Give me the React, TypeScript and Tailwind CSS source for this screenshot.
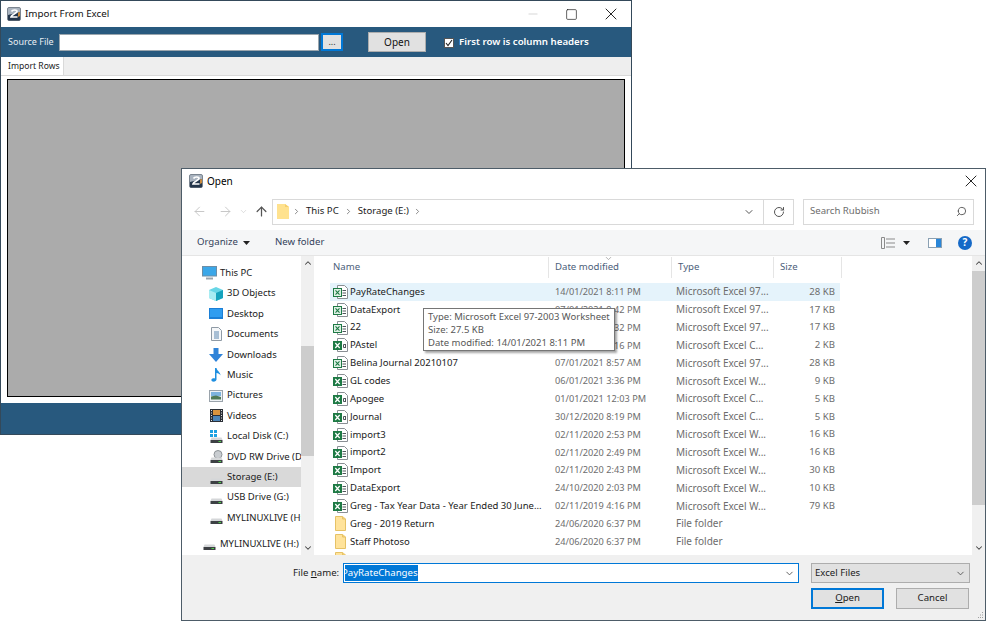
import { ArrowLeft, ArrowRight, ArrowUp, ChevronDown, ChevronRight, ChevronUp, RotateCw, Search, Square, Minus, X } from 'lucide-react';

const font = "font-['Noto_Sans','Open_Sans',sans-serif]";

type FileRow = { name: string; date: string; type: string; size: string; icon: 'xls' | 'xlsx' | 'csv' | 'folder' };

const files: FileRow[] = [
  { name: 'PayRateChanges', date: '14/01/2021 8:11 PM', type: 'Microsoft Excel 97...', size: '28 KB', icon: 'xls' },
  { name: 'DataExport', date: '07/01/2021 8:42 PM', type: 'Microsoft Excel 97...', size: '17 KB', icon: 'xls' },
  { name: '22', date: '07/01/2021 8:32 PM', type: 'Microsoft Excel 97...', size: '17 KB', icon: 'xls' },
  { name: 'PAstel', date: '07/01/2021 8:16 PM', type: 'Microsoft Excel C...', size: '2 KB', icon: 'csv' },
  { name: 'Belina Journal 20210107', date: '07/01/2021 8:57 AM', type: 'Microsoft Excel 97...', size: '28 KB', icon: 'xls' },
  { name: 'GL codes', date: '06/01/2021 3:36 PM', type: 'Microsoft Excel W...', size: '9 KB', icon: 'xlsx' },
  { name: 'Apogee', date: '01/01/2021 12:03 PM', type: 'Microsoft Excel C...', size: '5 KB', icon: 'csv' },
  { name: 'Journal', date: '30/12/2020 8:19 PM', type: 'Microsoft Excel C...', size: '5 KB', icon: 'csv' },
  { name: 'import3', date: '02/11/2020 2:53 PM', type: 'Microsoft Excel W...', size: '16 KB', icon: 'xlsx' },
  { name: 'import2', date: '02/11/2020 2:49 PM', type: 'Microsoft Excel W...', size: '16 KB', icon: 'xlsx' },
  { name: 'Import', date: '02/11/2020 2:43 PM', type: 'Microsoft Excel W...', size: '30 KB', icon: 'xlsx' },
  { name: 'DataExport', date: '24/10/2020 2:03 PM', type: 'Microsoft Excel W...', size: '10 KB', icon: 'xlsx' },
  { name: 'Greg - Tax Year Data - Year Ended 30 June...', date: '02/11/2019 4:16 PM', type: 'Microsoft Excel W...', size: '79 KB', icon: 'xlsx' },
  { name: 'Greg - 2019 Return', date: '24/06/2020 6:37 PM', type: 'File folder', size: '', icon: 'folder' },
  { name: 'Staff Photoso', date: '24/06/2020 6:37 PM', type: 'File folder', size: '', icon: 'folder' },
  { name: '', date: '', type: '', size: '', icon: 'folder' },
];

function AppIcon() {
  return (
    <svg width="14" height="14" viewBox="0 0 14 14" className="shrink-0">
      <rect x="0.5" y="0.5" width="13" height="13" rx="1.5" fill="#a9b3bf" stroke="#7b8590" />
      <path d="M1 8L13 5V12.5a1 1 0 0 1-1 1H2a1 1 0 0 1-1-1Z" fill="#24364b" />
      <path d="M11 5.5L13 5V9L11 10Z" fill="#c98a3c" />
      <path d="M4.5 4.5C5.5 2.5 10 2.5 10 4.5C10 6.5 4.5 7 4 10H10.5" fill="none" stroke="#fff" strokeWidth="1.7" />
    </svg>
  );
}

function FileIcon({ kind }: { kind: FileRow['icon'] }) {
  if (kind === 'folder') return <FolderIcon />;
  return (
    <svg width="15" height="14" viewBox="0 0 15 14" className="shrink-0">
      <path d="M4.5 0.5H11.5L14.5 3.5V13.5H4.5Z" fill="#fff" stroke="#8a8f94" />
      {kind !== 'csv' && <path d="M9.5 5.5H13M9.5 8H13M9.5 10.5H13" stroke="#50565c" />}
      {kind === 'csv' && <path d="M12.5 6.5H10.5V9.5H12.5M12.5 6V10" fill="none" stroke="#50565c" />}
      {kind === 'xls' ? (
        <>
          <rect x="0.5" y="3.5" width="8" height="8" fill="#dff1e5" stroke="#1e7a45" />
          <path d="M2.5 5.3L6.5 9.7M6.5 5.3L2.5 9.7" stroke="#1e7a45" strokeWidth="1.1" />
        </>
      ) : (
        <>
          <rect x="0" y="3" width="9" height="9" fill="#1e7a45" />
          <path d="M2.3 5L6.7 10M6.7 5L2.3 10" stroke="#fff" strokeWidth="1.2" />
        </>
      )}
    </svg>
  );
}

function FolderIcon() {
  return (
    <span className="flex w-[15px] shrink-0 pl-[2px]">
      <svg width="11" height="15" viewBox="0 0 11 15">
        <path d="M0.5 0.5H7.5L10.5 3V14.5H0.5Z" fill="#ffe39b" stroke="#e6c266" />
        <path d="M7.5 0.5V3H10.5" fill="#f6d27a" stroke="#e6c266" />
      </svg>
    </span>
  );
}

function DriveIcon({ win, disc }: { win?: boolean; disc?: boolean }) {
  return (
    <svg width="13" height="13" viewBox="0 0 13 13" className="shrink-0">
      {win && <path d="M0 0H3V3H0ZM4 0H7V3H4ZM0 4H3V7H0ZM4 4H7V7H4Z" fill="#1ba1e2" />}
      {disc && <circle cx="8" cy="4.5" r="4" fill="#c9cdd1" stroke="#8d9296" />}
      <path d="M1.5 7.5H11.5L12.5 10H0.5Z" fill="#d5d7d9" />
      <rect x="0.5" y="10" width="12" height="3" fill="#3d4044" />
      <rect x="8.5" y="11" width="2.5" height="1" fill="#4fd14a" />
    </svg>
  );
}

function NavIcon({ name }: { name: string }) {
  if (name === 'pc')
    return (
      <svg width="15" height="14" viewBox="0 0 15 14" className="shrink-0">
        <rect x="0.5" y="0.5" width="14" height="9.5" fill="#3ba7e8" stroke="#6d8ea6" />
        <path d="M4 12.5H11" stroke="#9aa4ac" strokeWidth="2" />
      </svg>
    );
  if (name === '3d')
    return (
      <svg width="14" height="14" viewBox="0 0 14 14" className="shrink-0">
        <path d="M7 0L14 3V11L7 14L0 11V3Z" fill="#67d6e6" />
        <path d="M7 6L14 3V11L7 14Z" fill="#16a3bd" />
        <path d="M0 3L7 6V14L0 11Z" fill="#a8ecf2" />
      </svg>
    );
  if (name === 'desktop')
    return (
      <svg width="14" height="11" viewBox="0 0 14 11" className="shrink-0">
        <rect width="14" height="11" fill="#1b7fd6" />
        <rect x="1" y="1" width="12" height="8" fill="#2f9df0" />
      </svg>
    );
  if (name === 'docs')
    return (
      <svg width="11" height="14" viewBox="0 0 11 14" className="shrink-0">
        <path d="M0.5 0.5H7.5L10.5 3.5V13.5H0.5Z" fill="#f5f7f9" stroke="#8f9aa5" />
        <path d="M3 5H8M3 7H8M3 9H8M3 11H8" stroke="#5a86b0" />
      </svg>
    );
  if (name === 'down')
    return (
      <svg width="14" height="14" viewBox="0 0 14 14" className="shrink-0">
        <path d="M4.5 0H9.5V6H14L7 14L0 6H4.5Z" fill="#2f83d8" />
      </svg>
    );
  if (name === 'music')
    return (
      <svg width="10" height="14" viewBox="0 0 10 14" className="shrink-0">
        <path d="M4 0H5.5C6 3 9.5 4 9.5 7.5C9 6 7 5 5.5 5V11.5C5.5 13 3.5 14 1.5 13.5C0 13 0 11 1.5 10.5C2.5 10 3.5 10 4 10.5Z" fill="#1f8fe0" />
      </svg>
    );
  if (name === 'pics')
    return (
      <svg width="14" height="12" viewBox="0 0 14 12" className="shrink-0">
        <rect x="0.5" y="0.5" width="13" height="11" fill="#eef2f5" stroke="#9aa3ab" />
        <rect x="2" y="2" width="10" height="4" fill="#7db3dd" />
        <path d="M2 9.5V6.5L7 5.5L12 7V9.5Z" fill="#4f7a56" />
      </svg>
    );
  if (name === 'videos')
    return (
      <svg width="13" height="13" viewBox="0 0 13 13" className="shrink-0">
        <rect width="13" height="13" fill="#2b2f36" />
        <rect x="3" y="1" width="7" height="5" fill="#d9943e" />
        <rect x="3" y="7" width="7" height="5" fill="#4c85b8" />
        <path d="M1 1.5H2M1 4H2M1 6.5H2M1 9H2M1 11.5H2M11 1.5H12M11 4H12M11 6.5H12M11 9H12M11 11.5H12" stroke="#dfe3e6" />
      </svg>
    );
  if (name === 'c') return <DriveIcon win />;
  if (name === 'dvd') return <DriveIcon disc />;
  return <DriveIcon />;
}

const navItems = [
  { label: 'This PC', icon: 'pc', top: true },
  { label: '3D Objects', icon: '3d' },
  { label: 'Desktop', icon: 'desktop' },
  { label: 'Documents', icon: 'docs' },
  { label: 'Downloads', icon: 'down' },
  { label: 'Music', icon: 'music' },
  { label: 'Pictures', icon: 'pics' },
  { label: 'Videos', icon: 'videos' },
  { label: 'Local Disk (C:)', icon: 'c' },
  { label: 'DVD RW Drive (D:) Audio CD', icon: 'dvd' },
  { label: 'Storage (E:)', icon: 'drive', active: true },
  { label: 'USB Drive (G:)', icon: 'drive' },
  { label: 'MYLINUXLIVE (H:)', icon: 'drive' },
];

function Sidebar() {
  return (
    <div className="flex w-[132px] shrink-0">
      <div className="w-[119px] shrink-0 overflow-hidden pt-[7px] text-[9.5px] text-[#1a1a1a]">
        {navItems.map(item => (
          <div
            key={item.label}
            className={`flex h-[20.4px] items-center whitespace-nowrap ${item.top ? 'pl-[18px]' : 'pl-[25px]'} ${item.active ? 'bg-[#d9d9d9]' : ''}`}
          >
            <span className="flex w-[18px] shrink-0 items-center justify-center">
              <NavIcon name={item.icon} />
            </span>
            <span className="ml-[2px]">{item.label}</span>
          </div>
        ))}
        <div className="mt-[5.5px] flex h-[20.4px] items-center whitespace-nowrap pl-[21px]">
          <span className="w-[17px] shrink-0"><NavIcon name="drive" /></span>
          <span>MYLINUXLIVE (H:)</span>
        </div>
      </div>
      <div className="flex w-[13px] shrink-0 flex-col bg-[#f0f0f0]">
        <div className="flex h-[14px] items-center justify-center"><ChevronUp size={10} strokeWidth={2.5} color="#444" /></div>
        <div className="flex-1 pt-[76px] pb-[85px]"><div className="h-full bg-[#cdcdcd]" /></div>
        <div className="flex h-[14px] items-center justify-center"><ChevronDown size={10} strokeWidth={2.5} color="#444" /></div>
      </div>
    </div>
  );
}

function ColHead({ w, label, sorted }: { w: string; label: string; sorted?: boolean }) {
  return (
    <div className={`relative flex h-[21px] items-center border-r border-[#e5e5e5] pl-[6px] ${w}`}>
      {sorted && <ChevronDown size={9} color="#999" className="absolute left-[55px] top-[-3px]" />}
      {label}
    </div>
  );
}

function FileList() {
  return (
    <div className="relative flex min-w-0 flex-1 overflow-hidden">
      <div className="min-w-0 flex-1 pl-[16px] text-[9.6px]">
        <div className="flex h-[27px] pt-[1px] text-[#4c607a]">
          <div className="flex h-[21px] w-[219px] items-center border-r border-[#e5e5e5] pl-[3px]">Name</div>
          <ColHead w="w-[123px]" label="Date modified" sorted />
          <ColHead w="w-[102px]" label="Type" />
          <ColHead w="w-[68px]" label="Size" />
        </div>
        {files.map((f, i) => (
          <div
            key={i}
            className={`flex h-[17.85px] w-[510px] items-center whitespace-nowrap ${i === 0 ? 'bg-[#e5f3fb]' : ''}`}
          >
            <div className="flex w-[219px] items-center gap-[2px] pl-[3px] text-[9.5px] text-[#1a1a1a]">
              <FileIcon kind={f.icon} />
              <span>{f.name}</span>
            </div>
            <div className="w-[122px] pl-[6px] text-[9.2px] text-[#6d6d6d]">{f.date}</div>
            <div className="w-[103px] pl-[5px] text-[10px] text-[#6d6d6d]">{f.type}</div>
            <div className="w-[62px] pr-[1px] text-right text-[#6d6d6d]">{f.size}</div>
          </div>
        ))}
      </div>
      <div className="flex w-[13px] shrink-0 flex-col bg-[#f0f0f0]">
        <div className="flex h-[14px] items-center justify-center"><ChevronUp size={10} strokeWidth={2.5} color="#444" /></div>
        <div className="flex-1 pt-[1px] pb-[36px]"><div className="h-full bg-[#cdcdcd]" /></div>
        <div className="flex h-[14px] items-center justify-center"><ChevronDown size={10} strokeWidth={2.5} color="#444" /></div>
      </div>
      <div className="absolute left-[109px] top-[52px] border border-[#767676] bg-white px-[4px] pt-[1px] pb-[1px] text-[9.5px] leading-[13px] text-[#575757] shadow-[2px_2px_2px_rgba(0,0,0,0.35)]">
        <div className="whitespace-nowrap">Type: Microsoft Excel 97-2003 Worksheet</div>
        <div className="whitespace-nowrap">Size: 27.5 KB</div>
        <div className="whitespace-nowrap">Date modified: 14/01/2021 8:11 PM</div>
      </div>
    </div>
  );
}

function OpenDialog() {
  return (
    <div className={`absolute left-[181px] top-[168px] flex h-[453px] w-[805px] flex-col border border-[#4d5c68] bg-white ${font}`}>
      <div className="flex h-[24px] shrink-0 items-center pl-[7px] pr-[4px] text-[10px] text-black">
        <AppIcon />
        <span className="ml-[4px]">Open</span>
        <X size={20} strokeWidth={1.1} className="ml-auto" color="#111" />
      </div>
      <div className="flex h-[37px] shrink-0 items-center text-[9.6px]">
        <div className="flex w-[90px] items-center pl-[10px] text-[#c4c4c4]">
          <ArrowLeft size={15} strokeWidth={1.5} />
          <ArrowRight size={15} strokeWidth={1.5} className="ml-[11px]" />
          <ChevronDown size={9} strokeWidth={1.5} className="ml-[6px]" />
          <ArrowUp size={15} strokeWidth={2} color="#555" className="ml-[6px]" />
        </div>
        <div className="flex h-[26px] w-[522px] items-center border border-[#d9d9d9] text-[#1a1a1a]">
          <svg width="12" height="15" viewBox="0 0 12 15" className="ml-[4px] shrink-0"><path d="M0 0H8L12 3V15H0Z" fill="#ffe28f" /><path d="M8 0V3H12" fill="#f5cf6d" /></svg>
          <ChevronRight size={9} className="ml-[3px]" color="#666" />
          <span className="ml-[5px]">This PC</span>
          <ChevronRight size={9} className="ml-[5px]" color="#666" />
          <span className="ml-[5px]">Storage (E:)</span>
          <ChevronRight size={9} className="ml-[4px]" color="#666" />
          <div className="ml-auto flex h-full w-[29px] items-center justify-center border-r border-[#d9d9d9]">
            <ChevronDown size={12} color="#555" />
          </div>
          <div className="flex w-[29px] items-center justify-center"><RotateCw size={12} color="#555" /></div>
        </div>
        <div className="ml-[9px] flex h-[26px] w-[171px] items-center justify-between border border-[#d9d9d9] pl-[6px] pr-[6px] text-[#6d6d6d]">
          <span>Search Rubbish</span>
          <Search size={11} color="#555" className="-scale-x-100" />
        </div>
      </div>
      <div className="flex h-[26px] shrink-0 items-center border-b border-[#e5e5e5] bg-[#f5f6f7] pl-[15px] pr-[13px] text-[9.6px] text-[#33415a]">
        <span>Organize</span>
        <svg width="7" height="4" viewBox="0 0 7 4" className="ml-[5px]"><path d="M0 0H7L3.5 4Z" fill="#222" /></svg>
        <span className="ml-[25px]">New folder</span>
        <svg width="14" height="12" viewBox="0 0 14 12" className="ml-auto"><path d="M0.5 0.5H3.5V11.5H0.5ZM5 2H14M5 6H14M5 10H14" fill="none" stroke="#8b8b8b" /></svg>
        <svg width="7" height="4" viewBox="0 0 7 4" className="ml-[8px]"><path d="M0 0H7L3.5 4Z" fill="#222" /></svg>
        <svg width="14" height="10" viewBox="0 0 14 10" className="ml-[18px]"><rect x="0.5" y="0.5" width="13" height="9" fill="#fff" stroke="#8aa0b3" /><rect x="8" y="1" width="5" height="8" fill="#2a86d8" /></svg>
        <div className="ml-[16px] flex h-[14px] w-[14px] items-center justify-center rounded-full bg-[#1569c7] text-[10px] font-bold text-white">?</div>
      </div>
      <div className="flex min-h-0 flex-1">
        <Sidebar />
        <FileList />
      </div>
      <div className="relative h-[65px] shrink-0 bg-[#f0f0f0] text-[9.6px] text-[#1a1a1a]">
        <div className="flex items-center pt-[8px] pr-[15px]">
          <span className="ml-[111px] w-[50px] whitespace-nowrap">File <u>n</u>ame:</span>
          <div className="flex h-[20px] w-[456px] items-center border border-[#0078d7] bg-white pl-[1px]">
            <span className="h-[16px] w-[73px] overflow-hidden whitespace-nowrap bg-[#0078d7] leading-[15px] text-white">
              <span className="-ml-[3px] block">PayRateChanges</span>
            </span>
            <ChevronDown size={11} color="#555" className="ml-auto mr-[3px]" />
          </div>
          <div className="ml-[12px] flex h-[20px] flex-1 items-center justify-between border border-[#adadad] bg-[#e1e1e1] pl-[3px] pr-[3px]">
            <span>Excel Files</span>
            <ChevronDown size={11} color="#555" />
          </div>
        </div>
        <div className="flex justify-end gap-[12px] pt-[5px] pr-[16px]">
          <div className="flex h-[21px] w-[73px] items-center justify-center border-2 border-[#0078d7] bg-[#e1e1e1]"><span><u>O</u>pen</span></div>
          <div className="flex h-[21px] w-[73px] items-center justify-center border border-[#adadad] bg-[#e1e1e1]">Cancel</div>
        </div>
        <svg width="8" height="8" viewBox="0 0 8 8" className="absolute bottom-[1px] right-[1px]"><path d="M6 1H7V2H6ZM4 3.5H5V4.5H4ZM6 3.5H7V4.5H6ZM2 6H3V7H2ZM4 6H5V7H4ZM6 6H7V7H6Z" fill="#a0a0a0" /></svg>
      </div>
    </div>
  );
}

function ImportWindow() {
  return (
    <div className={`absolute left-0 top-0 flex h-[435px] w-[632px] flex-col border border-[#34495a] bg-white ${font}`}>
      <div className="flex h-[26px] shrink-0 items-center pl-[6px] text-[9.8px] text-[#111]">
        <AppIcon />
        <span className="ml-[4px]">Import From Excel</span>
        <Minus size={14} strokeWidth={1} color="#bbb" className="ml-auto" />
        <Square size={13} strokeWidth={1.2} color="#111" className="ml-[25px]" />
        <X size={20} strokeWidth={1.1} color="#111" className="ml-[23px] mr-[10px]" />
      </div>
      <div className="flex h-[30px] shrink-0 items-center bg-[#28597e] pl-[7px] text-[10px]">
        <span className="w-[51px] whitespace-nowrap text-[9px] text-[#e8eef3]">Source File</span>
        <div className="h-[17px] w-[260px] border border-[#9aa5ad] bg-white" />
        <div className="ml-[2px] flex h-[18px] w-[22px] items-center justify-center border-2 border-[#0078d7] bg-[#e1e1e1] text-[9px] text-[#333]">...</div>
        <div className="ml-[25px] flex h-[20px] w-[58px] items-center justify-center border border-[#adadad] bg-[#e1e1e1] text-[#111]">Open</div>
        <div className="ml-[18px] mt-[1px] flex h-[10px] w-[10px] items-center justify-center border border-[#555] bg-white">
          <svg width="8" height="8" viewBox="0 0 8 8"><path d="M1 4L3 6.5L7 1" fill="none" stroke="#222" strokeWidth="1.1" /></svg>
        </div>
        <span className="ml-[5px] mt-[1px] whitespace-nowrap text-[9.7px] font-semibold text-white">First row is column headers</span>
      </div>
      <div className="flex h-[18px] shrink-0 items-end bg-[#eeeeee] text-[8.6px] text-[#222]">
        <div className="flex h-[18px] w-[63px] items-center whitespace-nowrap border-r border-[#d9d9d9] bg-white pt-[1px] pl-[7px]">Import Rows</div>
      </div>
      <div className="flex min-h-0 flex-1 flex-col border-t border-[#d9d9d9] px-[6px] pt-[3px] pb-[6px]">
        <div className="flex-1 border border-black bg-[#ababab]" />
      </div>
      <div className="h-[31px] shrink-0 bg-[#28597e]" />
    </div>
  );
}

export default function App() {
  return (
    <div className="relative h-[621px] w-[986px] overflow-hidden bg-white">
      <ImportWindow />
      <OpenDialog />
    </div>
  );
}
